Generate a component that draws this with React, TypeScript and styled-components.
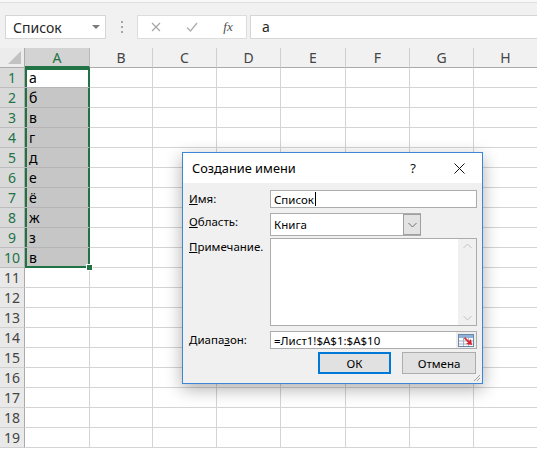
import React from "react";
import styled, { createGlobalStyle } from "styled-components";

const GlobalStyle = createGlobalStyle`
  html, body {
    margin: 0;
    padding: 0;
    background: #ffffff;
  }
  body {
    font-family: "Noto Sans", "Open Sans", sans-serif;
  }
`;

const GREEN = "#217346";
const GRID = "#d4d4d4";

const columns = ["A", "B", "C", "D", "E", "F", "G", "H"];
const columnWidths = [65, 63, 64, 64, 65, 64, 64, 64];
const values = ["а", "б", "в", "г", "д", "е", "ё", "ж", "з", "в"];

const Page = styled.div`
  position: relative;
  width: 537px;
  height: 449px;
  overflow: hidden;
  background: #ffffff;
`;

const Toolbar = styled.div`
  display: flex;
  align-items: flex-start;
  height: 48px;
  box-sizing: border-box;
  padding: 13px 0 0 5px;
  background: #f1f1f1;
  border-top: 2px solid #f9f9f9;
  box-shadow: inset 0 1px 0 #dedede;
`;

const NameBox = styled.div`
  display: flex;
  align-items: center;
  justify-content: space-between;
  width: 101px;
  height: 24px;
  box-sizing: border-box;
  padding: 0 5px 0 7px;
  background: #ffffff;
  border: 1px solid #d6d6d6;
  font-size: 14px;
  color: #262626;
`;

const Caret = styled.span`
  width: 0;
  height: 0;
  border-left: 4px solid transparent;
  border-right: 4px solid transparent;
  border-top: 4px solid #7a7a7a;
`;

const Grip = styled.div`
  display: flex;
  flex-direction: column;
  justify-content: center;
  gap: 3px;
  width: 31px;
  height: 24px;
  align-items: center;
`;

const GripDot = styled.span`
  width: 2px;
  height: 2px;
  background: #a6a6a6;
`;

const FxButtons = styled.div`
  display: flex;
  align-items: center;
  width: 110px;
  height: 24px;
  box-sizing: border-box;
  background: #ffffff;
  border: 1px solid #dcdcdc;
`;

const FxSlot = styled.span`
  display: flex;
  align-items: center;
  justify-content: center;
  width: 36px;
  height: 100%;
`;

const FxText = styled.span`
  font-family: "Liberation Serif", "DejaVu Serif", serif;
  font-style: italic;
  font-size: 13px;
  color: #4d4d4d;
`;

const FormulaInput = styled.div`
  flex: 1;
  height: 24px;
  margin-left: 3px;
  box-sizing: border-box;
  padding: 0 11px;
  background: #ffffff;
  border: 1px solid #d6d6d6;
  border-right: none;
  font-size: 14px;
  line-height: 22px;
  color: #262626;
`;

const Sheet = styled.div<{ $widths: number[] }>`
  display: grid;
  grid-template-columns: 25px ${(p) => p.$widths.map((w) => `${w}px`).join(" ")};
  grid-auto-rows: 20px;
  font-size: 14px;
`;

const Corner = styled.div`
  position: relative;
  box-sizing: border-box;
  background: #ececec;
  border-right: 1px solid #ababab;
  border-bottom: 1px solid #ababab;

  &::after {
    content: "";
    position: absolute;
    right: 3px;
    bottom: 3px;
    width: 0;
    height: 0;
    border-left: 13px solid transparent;
    border-bottom: 13px solid #c2c2c2;
  }
`;

const ColHeader = styled.div<{ $active?: boolean }>`
  display: flex;
  align-items: center;
  justify-content: center;
  box-sizing: border-box;
  background: ${(p) => (p.$active ? "#d3d3d3" : "#f1f1f1")};
  color: ${(p) => (p.$active ? GREEN : "#444444")};
  border-right: 1px solid ${(p) => (p.$active ? "#b8b8b8" : "#cfcfcf")};
  border-bottom: ${(p) => (p.$active ? `2px solid ${GREEN}` : "1px solid #ababab")};
`;

const RowHeader = styled.div<{ $active?: boolean }>`
  display: flex;
  align-items: center;
  justify-content: center;
  box-sizing: border-box;
  background: ${(p) => (p.$active ? "#d9d9d9" : "#e9e9e9")};
  color: ${(p) => (p.$active ? GREEN : "#444444")};
  border-right: 1px solid #ababab;
  border-bottom: 1px solid ${(p) => (p.$active ? "#bdbdbd" : "#d0d0d0")};
`;

const Cell = styled.div<{
  $sel?: boolean;
  $current?: boolean;
  $first?: boolean;
  $last?: boolean;
}>`
  position: relative;
  box-sizing: border-box;
  padding-left: 4px;
  line-height: 19px;
  color: #000000;
  white-space: nowrap;
  background: ${(p) => (p.$sel && !p.$current ? "#c6c6c6" : "#ffffff")};
  border-right: 1px solid ${(p) => (p.$sel ? GREEN : GRID)};
  border-bottom: 1px solid ${(p) => (p.$last ? GREEN : p.$sel ? "#b5b5b5" : GRID)};
  box-shadow: ${(p) =>
    p.$sel
      ? [
          `inset 2px 0 0 ${GREEN}`,
          `inset -1px 0 0 ${GREEN}`,
          p.$first ? `inset 0 2px 0 ${GREEN}` : null,
          p.$last ? `inset 0 -1px 0 ${GREEN}` : null,
        ]
          .filter(Boolean)
          .join(", ")
      : "none"};
`;

const FillHandle = styled.span`
  position: absolute;
  right: -4px;
  bottom: -4px;
  z-index: 2;
  width: 5px;
  height: 5px;
  background: ${GREEN};
  border: 1px solid #ffffff;
`;

/* dialog */

const Dialog = styled.div`
  position: absolute;
  left: 182px;
  top: 152px;
  width: 301px;
  height: 232px;
  box-sizing: border-box;
  display: flex;
  flex-direction: column;
  background: #f0f0f0;
  border: 1px solid #3c86d6;
  box-shadow: 0 5px 16px rgba(0, 0, 0, 0.32);
  font-size: 11.5px;
  color: #000000;
`;

const TitleBar = styled.div`
  display: flex;
  align-items: center;
  height: 30px;
  flex-shrink: 0;
  padding-left: 9px;
  background: #ffffff;
`;

const Title = styled.span`
  flex: 1;
  font-size: 12.8px;
  color: #000000;
`;

const TitleButton = styled.span`
  display: flex;
  align-items: center;
  justify-content: center;
  width: 46px;
  height: 30px;
  font-size: 13px;
  color: #111111;
`;

const Body = styled.div`
  display: flex;
  flex-direction: column;
  padding: 7px 5px 0 6px;
`;

const FieldRow = styled.div<{ $gap: number }>`
  display: grid;
  grid-template-columns: 81px 207px;
  margin-top: ${(p) => p.$gap}px;
`;

const Label = styled.span`
  line-height: 18px;
`;

const TextBox = styled.div<{ $h?: number; $w?: number }>`
  display: flex;
  align-items: center;
  width: ${(p) => p.$w ?? 207}px;
  height: ${(p) => p.$h ?? 18}px;
  box-sizing: border-box;
  padding-left: 3px;
  background: #ffffff;
  border: 1px solid #acacac;
`;

const Cursor = styled.span`
  width: 1px;
  height: 14px;
  margin-left: 1px;
  background: #000000;
`;

const Value = styled.span`
  flex: 1;
  white-space: nowrap;
`;

const ComboButton = styled.span`
  display: flex;
  align-items: center;
  justify-content: center;
  width: 18px;
  height: 100%;
  box-sizing: border-box;
  background: #e3e3e3;
  border: 1px solid #9f9f9f;
  margin-right: -1px;
`;

const Memo = styled.div`
  display: flex;
  justify-content: flex-end;
  width: 207px;
  height: 88px;
  box-sizing: border-box;
  background: #ffffff;
  border: 1px solid #acacac;
`;

const ScrollTrack = styled.div`
  display: flex;
  flex-direction: column;
  justify-content: space-between;
  align-items: center;
  width: 18px;
  padding: 4px 0;
  box-sizing: border-box;
  background: #f0f0f0;
`;

const RefButton = styled.span`
  display: flex;
  align-items: center;
  justify-content: center;
  width: 20px;
  height: 100%;
  background: #ededed;
`;

const ButtonRow = styled.div`
  display: flex;
  justify-content: flex-end;
  gap: 11px;
  margin-top: 3px;
  padding-right: 1px;
`;

const DialogButton = styled.button<{ $default?: boolean; $w: number }>`
  width: ${(p) => p.$w}px;
  height: 22px;
  box-sizing: border-box;
  padding: 0;
  background: #e1e1e1;
  border: ${(p) => (p.$default ? "2px solid #0078d7" : "1px solid #adadad")};
  font-family: inherit;
  font-size: 11.5px;
  color: #000000;
`;

const ResizeGrip = styled.svg`
  position: absolute;
  right: 1px;
  bottom: 1px;
`;

const Chevron = ({ up, color = "#8a8a8a" }: { up?: boolean; color?: string }) => (
  <svg width="9" height="6" viewBox="0 0 9 6">
    <polyline
      points={up ? "0.5,5 4.5,1 8.5,5" : "0.5,1 4.5,5 8.5,1"}
      fill="none"
      stroke={color}
      strokeWidth="1"
    />
  </svg>
);

const RangeIcon = () => (
  <svg width="16" height="13" viewBox="0 0 16 13">
    <rect x="0.5" y="0.5" width="15" height="12" fill="#ffffff" stroke="#6d87a8" />
    <rect x="1" y="1" width="14" height="3" fill="#8fb0d9" />
    <line x1="1" y1="7" x2="15" y2="7" stroke="#9fb3cc" />
    <line x1="1" y1="10" x2="15" y2="10" stroke="#9fb3cc" />
    <line x1="5.5" y1="4" x2="5.5" y2="12" stroke="#9fb3cc" />
    <line x1="10.5" y1="4" x2="10.5" y2="12" stroke="#9fb3cc" />
    <polygon points="7,3 11,7 13,5 14,11 8,10 10,8.5 6,4.5" fill="#d9262c" />
  </svg>
);

export default function App() {
  return (
    <Page>
      <GlobalStyle />
      <Toolbar>
        <NameBox>
          <span>Список</span>
          <Caret />
        </NameBox>
        <Grip>
          <GripDot />
          <GripDot />
          <GripDot />
        </Grip>
        <FxButtons>
          <FxSlot>
            <svg width="10" height="10" viewBox="0 0 10 10">
              <path d="M1 1 L9 9 M9 1 L1 9" stroke="#a3a3a3" strokeWidth="1.1" />
            </svg>
          </FxSlot>
          <FxSlot>
            <svg width="12" height="10" viewBox="0 0 12 10">
              <path d="M1 5.5 L4.5 9 L11 1" fill="none" stroke="#b0b0b0" strokeWidth="1.4" />
            </svg>
          </FxSlot>
          <FxSlot>
            <FxText>fx</FxText>
          </FxSlot>
        </FxButtons>
        <FormulaInput>а</FormulaInput>
      </Toolbar>

      <Sheet $widths={columnWidths}>
        <Corner />
        {columns.map((c, i) => (
          <ColHeader key={c} $active={i === 0}>
            {c}
          </ColHeader>
        ))}
        {Array.from({ length: 19 }, (_, r) => (
          <React.Fragment key={r}>
            <RowHeader $active={r < 10}>{r + 1}</RowHeader>
            {columns.map((c, ci) => {
              const sel = ci === 0 && r < 10;
              return (
                <Cell
                  key={c}
                  $sel={sel}
                  $current={sel && r === 0}
                  $first={sel && r === 0}
                  $last={sel && r === 9}
                >
                  {sel ? values[r] : null}
                  {sel && r === 9 && <FillHandle />}
                </Cell>
              );
            })}
          </React.Fragment>
        ))}
      </Sheet>

      <Dialog>
        <TitleBar>
          <Title>Создание имени</Title>
          <TitleButton>?</TitleButton>
          <TitleButton>
            <svg width="11" height="11" viewBox="0 0 11 11">
              <path d="M0.5 0.5 L10.5 10.5 M10.5 0.5 L0.5 10.5" stroke="#111" strokeWidth="1" />
            </svg>
          </TitleButton>
        </TitleBar>
        <Body>
          <FieldRow $gap={0}>
            <Label>
              <u>И</u>мя:
            </Label>
            <TextBox>
              <span>Список</span>
              <Cursor />
            </TextBox>
          </FieldRow>
          <FieldRow $gap={5}>
            <Label>
              <u>О</u>бласть:
            </Label>
            <TextBox $w={151} $h={23}>
              <Value>Книга</Value>
              <ComboButton>
                <Chevron color="#6e6e6e" />
              </ComboButton>
            </TextBox>
          </FieldRow>
          <FieldRow $gap={2}>
            <Label>
              <u>П</u>римечание.
            </Label>
            <Memo>
              <ScrollTrack>
                <Chevron up color="#c2c2c2" />
                <Chevron color="#c2c2c2" />
              </ScrollTrack>
            </Memo>
          </FieldRow>
          <FieldRow $gap={5}>
            <Label>
              Диапа<u>з</u>он:
            </Label>
            <TextBox>
              <Value>=Лист1!$A$1:$A$10</Value>
              <RefButton>
                <RangeIcon />
              </RefButton>
            </TextBox>
          </FieldRow>
          <ButtonRow>
            <DialogButton $default $w={73}>
              ОК
            </DialogButton>
            <DialogButton $w={74}>Отмена</DialogButton>
          </ButtonRow>
        </Body>
        <ResizeGrip width="8" height="8" viewBox="0 0 8 8">
          <path d="M7 1 L1 7 M7 4 L4 7" stroke="#a0a0a0" strokeWidth="1" />
        </ResizeGrip>
      </Dialog>
    </Page>
  );
}
